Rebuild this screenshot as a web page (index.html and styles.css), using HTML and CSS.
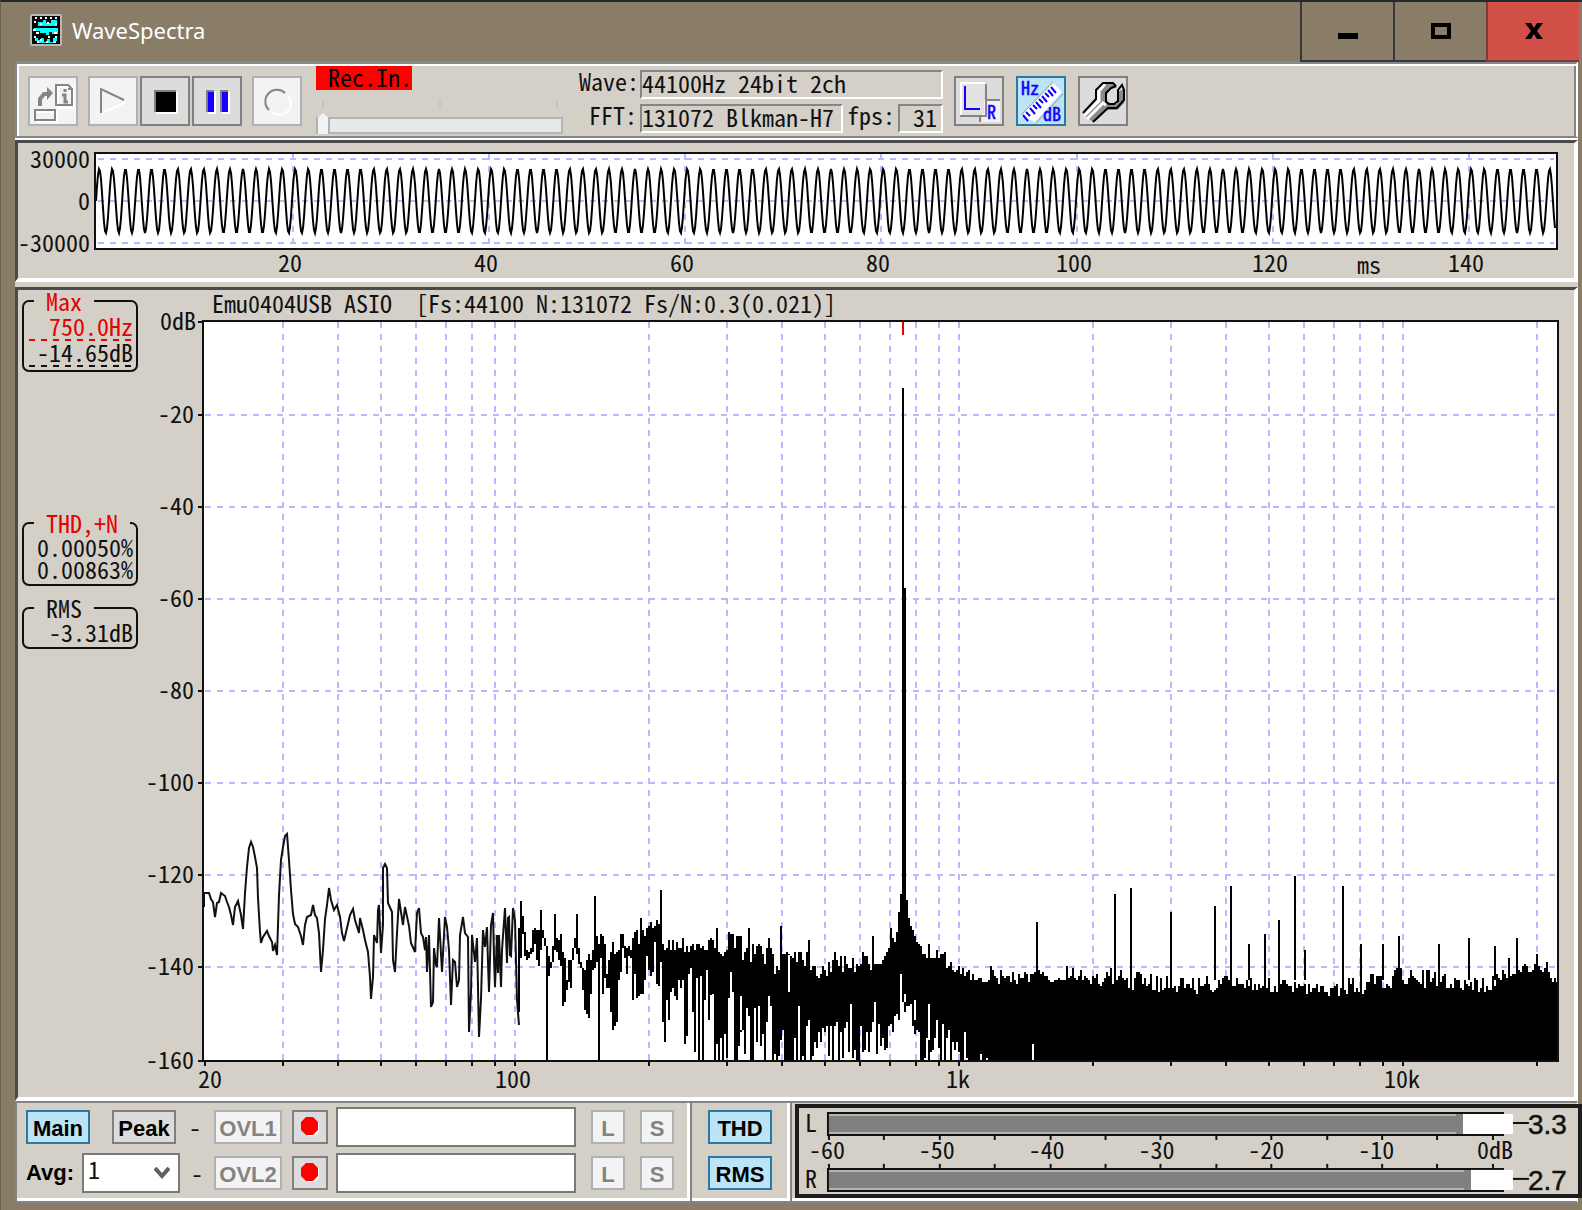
FILE: index.html
```html
<!DOCTYPE html>
<html lang="en">
<head>
  <meta charset="UTF-8">
  <meta name="viewport" content="width=device-width, initial-scale=1.0">
  <title>WaveSpectra</title>
  <link rel="stylesheet" href="styles.css">
</head>
<body>
  <div class="window">
    <!-- Title bar -->
    <header class="titlebar">
      <svg class="app-icon" width="32" height="32" viewBox="0 0 32 32" aria-hidden="true">
        <rect width="32" height="32" rx="2" fill="#b9b9b6"/>
        <rect x="2" y="2" width="28" height="28" fill="#000"/>
        <path d="M8 8h5V6h3v3h5V6h6v6H8z M4 14h24v6h-6v-2h-3v3h-3v-2h-6v-2H6v-2H4z M5 24h3v2h3v-2h3v4h3v-3h3v3h3v-4h4v3h-2v2H8v-2H5z" fill="#0ff"/>
        <path d="M5 4h2m3 0h2m3 0h2m3 0h2m3 0h2M4 8h2m4 2h2m5-1h2m6 1h2M3 16h3m0 3h3m15 0h3M4 23h2m4 3h2m6-3h2m5 0h2M7 28h2m7 0h2m6 0h2" stroke="#fff" stroke-width="2"/>
        <path d="M3 13h26" stroke="#000" stroke-width="2"/>
      </svg>
      <h1>WaveSpectra</h1>
      <div class="window-buttons">
        <button type="button" aria-label="Minimize">
          <svg width="20" height="20" viewBox="0 0 20 20"><path d="M0 12h20v6H0z"/></svg>
        </button>
        <button type="button" aria-label="Maximize">
          <svg width="20" height="20" viewBox="0 0 20 20"><path d="M2 4h16v12H2z" fill="none" stroke="#000" stroke-width="4"/></svg>
        </button>
        <button type="button" class="close" aria-label="Close">
          <svg width="20" height="20" viewBox="0 0 20 20"><path d="M1 2h6l3 5 3-5h6l-6 8 6 8h-6l-3-5-3 5H1l6-8z"/></svg>
        </button>
      </div>
    </header>

    <!-- Toolbar -->
    <div class="toolbar">
      <div class="transport">
        <button type="button" class="tool off open" aria-label="Open file" disabled>
          <svg width="46" height="46" viewBox="0 0 46 46" fill="none" stroke-width="2">
            <path d="M7 34h20v10H7M28 9v21h16V9z" stroke="#fff"/>
            <path d="M5 32h20v10H5zM26 7h12l4 4v16H26zM42 11h-4" stroke="#858585"/>
            <path d="M10 28v-7l4-5h6" stroke="#858585" stroke-width="4"/>
            <path d="M17 9l6 6-6 7z" fill="#858585"/>
            <path d="M35 11v3M32 17h3v7h3" stroke="#858585" stroke-width="3"/>
          </svg>
        </button>
        <button type="button" class="tool off play" aria-label="Play" disabled>
          <svg width="46" height="46" viewBox="0 0 46 46" fill="none" stroke-width="2">
            <path d="M12 35l24-11" stroke="#fff"/>
            <path d="M11 35V11l23 11" stroke="#858585"/>
          </svg>
        </button>
        <button type="button" class="tool" aria-label="Stop">
          <svg width="46" height="46" viewBox="0 0 46 46"><path d="M14 14h22v22H14z" fill="#fff"/><path d="M12 12h22v22H12z" fill="#808080"/><path d="M14 14h20v20H14z"/></svg>
        </button>
        <button type="button" class="tool" aria-label="Pause">
          <svg width="46" height="46" viewBox="0 0 46 46"><path d="M14 14h8v22h-8zM28 14h8v22h-8z" fill="#fff"/><path d="M12 12h8v22h-8zM26 12h8v22h-8z" fill="#808080"/><path d="M14 14h6v20h-6zM28 14h6v20h-6z" fill="#1400ff"/></svg>
        </button>
        <button type="button" class="tool off rec" aria-label="Record" disabled>
          <svg width="46" height="46" viewBox="0 0 46 46" fill="none" stroke-width="2">
            <path d="M34 18a11 11 0 0 1-17 15" stroke="#fff"/>
            <path d="M15 32a11 11 0 0 1 16-17" stroke="#858585"/>
          </svg>
        </button>
      </div>

      <div class="rec-status">
        <span class="rec-in">Rec.In.</span>
        <div class="ticks"><i></i><i></i><i></i></div>
        <input type="range" class="position" aria-label="Position" min="0" max="100" value="0">
      </div>

      <div class="info">
        <span>Wave:</span>
        <output class="readout wide">44100Hz 24bit 2ch</output>
        <span>FFT:</span>
        <output class="readout">131072 Blkman-H7</output>
        <span>fps:</span>
        <output class="readout fps">31</output>
      </div>

      <div class="options">
        <button type="button" class="tool" aria-label="Left and right channels">
          <svg width="46" height="46" viewBox="0 0 46 46">
            <path d="M26 22h18v22H26z" fill="#f3f3f3"/>
            <path d="M4 38h26V6M24 38v6M30 22h14" fill="none" stroke="#858585" stroke-width="2"/>
            <path d="M5 37V5h24" fill="none" stroke="#fff" stroke-width="2"/>
            <path d="M6 6h22v30H6z" fill="#e2e2e2"/>
            <path d="M9 8v23h15" fill="none" stroke="#1400ff" stroke-width="2"/>
            <text x="31" y="41" class="glyph">R</text>
          </svg>
        </button>
        <button type="button" class="tool on" aria-label="Scale in Hz and dB">
          <svg width="46" height="46" viewBox="0 0 46 46">
            <path d="M3 38L35 5l9 9L17 44z" fill="#fff"/>
            <path d="M18 45l27-29M3 37L35 4" stroke="#8d9aa0" stroke-width="1" fill="none"/>
            <path d="M5 37l5 6M8 34l4 4M12 30l5 6M15 27l4 4M18 24l5 6M21 21l4 4M24 18l5 6M27 15l4 4M30 12l5 6M33 9l5 6" stroke="#1400ff" stroke-width="2"/>
            <text x="3" y="17" class="glyph">Hz</text>
            <text x="25" y="43" class="glyph">dB</text>
          </svg>
        </button>
        <button type="button" class="tool" aria-label="Settings">
          <svg width="46" height="46" viewBox="0 0 46 46">
            <path d="M4 37l14-14V13l8-8h8l3 4-6 2-4 5v6l4 4h6l1-12 5-3 1 3v11l-7 7H26L13 44z" fill="#8a8a8a"/>
            <path d="M4 38l15-15V13l6-7M7 41l16-16 3 2" fill="none" stroke="#fff" stroke-width="3"/>
            <path d="M3 35l13-14V12l7-7h10l3 3M36 8l-5 2-5 5v9l3 2h5l4-3V12l4-5 2 5v10l-7 8h-9L13 44" fill="none" stroke="#000" stroke-width="2"/>
          </svg>
        </button>
      </div>
    </div>

    <!-- Waveform -->
    <section class="panel wave-panel">
      <svg id="wave" viewBox="0 1 1556 135" role="img" aria-label="Waveform"></svg>
    </section>

    <!-- Spectrum -->
    <section class="panel spectrum-panel">
      <aside class="readings">
        <fieldset class="max">
          <legend class="red">Max</legend>
          <p class="red dashed">750.0Hz</p>
          <p class="dashed">-14.65dB</p>
        </fieldset>
        <fieldset>
          <legend class="red">THD,+N</legend>
          <p>0.00050%</p>
          <p>0.00863%</p>
        </fieldset>
        <fieldset>
          <legend>RMS</legend>
          <p>-3.31dB</p>
        </fieldset>
      </aside>
      <svg id="spectrum" viewBox="0 0 1434 807" role="img" aria-label="Spectrum"></svg>
    </section>

    <!-- Bottom bar -->
    <footer class="bottom">
      <div class="overlays">
        <div class="row">
          <button type="button" class="push on">Main</button>
          <button type="button" class="push peak">Peak</button>
          <span class="dash">-</span>
          <button type="button" class="push off ovl" disabled>OVL1</button>
          <button type="button" class="push dot" aria-label="Capture overlay 1"><svg width="20" height="20" viewBox="0 0 20 20"><path d="M7 2h8l4 4v9l-4 4H8z" fill="#fff"/><path d="M6 0h7l5 5v8l-5 5H6l-5-5V5z" fill="#f00"/></svg></button>
          <input type="text" class="name" aria-label="Overlay 1 name">
          <button type="button" class="push off sq" disabled>L</button>
          <button type="button" class="push off sq" disabled>S</button>
        </div>
        <div class="row">
          <label for="avg">Avg:</label>
          <select id="avg">
            <option>1</option>
            <option>2</option>
            <option>4</option>
            <option>8</option>
          </select>
          <span class="dash">-</span>
          <button type="button" class="push off ovl" disabled>OVL2</button>
          <button type="button" class="push dot" aria-label="Capture overlay 2"><svg width="20" height="20" viewBox="0 0 20 20"><path d="M7 2h8l4 4v9l-4 4H8z" fill="#fff"/><path d="M6 0h7l5 5v8l-5 5H6l-5-5V5z" fill="#f00"/></svg></button>
          <input type="text" class="name" aria-label="Overlay 2 name">
          <button type="button" class="push off sq" disabled>L</button>
          <button type="button" class="push off sq" disabled>S</button>
        </div>
      </div>
      <div class="measure">
        <button type="button" class="push on">THD</button>
        <button type="button" class="push on">RMS</button>
      </div>
      <div class="meter">
        <svg id="meter" viewBox="0 0 780 86" role="img" aria-label="Level meter"></svg>
      </div>
    </footer>
  </div>

  <script src="script.js"></script>
</body>
</html>
```
FILE: styles.css
```css
* {
  box-sizing: border-box;
}

/* Half-width glyphs give a 12px cell at 24px */
body {
  margin: 0;
  background-color: #8a7d68;
  font-family: "Noto Sans CJK JP", "Liberation Mono", monospace;
  font-size: 24px;
  font-feature-settings: "hwid";
  color: #111;
}

button, input, select {
  font: inherit;
  font-feature-settings: inherit;
  color: inherit;
  margin: 0;
  padding: 0;
}

svg {
  display: block;
  overflow: visible;
}

.window {
  min-height: 100vh;
  padding: 0 4px 8px 14px;
  border-top: 2px solid #25282d;
  border-left: 1px solid #6c6252;
}

/* Title bar */
.titlebar {
  display: flex;
  align-items: center;
  height: 59px;
  padding-left: 15px;
}

.titlebar h1 {
  flex: 1;
  margin: 0 10px;
  padding-bottom: 3px;
  font-family: "Noto Sans", sans-serif;
  font-size: 22px;
  font-weight: normal;
  color: #fff;
}

.app-icon {
  margin-bottom: 3px;
}

.window-buttons {
  display: flex;
  align-self: stretch;
  margin-right: -1px;
}

.window-buttons button {
  display: flex;
  align-items: center;
  justify-content: center;
  width: 93px;
  height: 60px;
  border: 2px solid #38383a;
  border-width: 0 0 2px 2px;
  background: none;
}

.window-buttons .close {
  background-color: #d15149;
  border-color: #7c3a35;
}

/* Toolbar */
.toolbar {
  display: flex;
  height: 77px;
  padding: 0 0 0 9px;
  background-color: #d4d0c8;
  border-top: 3px solid #848a90;
  border-bottom: 2px solid #848482;
  border-left: 2px solid #848a90;
  border-right: 2px solid #fff;
  box-shadow: inset 2px 2px #fff, inset -2px 0 #848482;
}

.transport, .options {
  display: flex;
  padding-top: 12px;
  margin-left: 2px;
}

.tool {
  width: 50px;
  height: 50px;
  border: 2px solid #808080;
  background-color: #dcdcdc;
  margin-right: 2px;
}

.off {
  background-color: #f3f3f3;
  border-color: #adb2b5;
  color: #838383;
}

.on {
  background-color: #bce4f7;
  border-color: #2c78a0;
}

.open {
  margin-right: 10px;
}

.rec {
  margin-left: 8px;
}

.rec-status {
  width: 247px;
  margin-left: 12px;
  padding-top: 2px;
}

.rec-in {
  display: block;
  width: 96px;
  height: 24px;
  background-color: #f00;
  line-height: 22px;
  text-align: right;
  color: #000;
}

.ticks {
  display: flex;
  justify-content: space-between;
  margin: 11px 5px 5px 6px;
}

.ticks i {
  width: 2px;
  height: 7px;
  background-color: #c4c4c4;
}

.position {
  -webkit-appearance: none;
  appearance: none;
  display: block;
  width: 100%;
  height: 21px;
  background: none;
}

.position::-webkit-slider-runnable-track {
  height: 17px;
  margin-top: 4px;
  background-color: #e7eaea;
  border: 2px solid #b1b5b7;
}

.position::-webkit-slider-thumb {
  -webkit-appearance: none;
  width: 14px;
  height: 21px;
  margin: -6px 0 0 -2px;
  background: linear-gradient(#f3f3f3, #f3f3f3) center / 10px 100% no-repeat #adb2b5;
  clip-path: polygon(50% 0, 100% 28%, 100% 100%, 0 100%, 0 28%);
}

.info {
  display: grid;
  grid-template-columns: 61px 203px 55px 45px;
  grid-template-rows: 29px 29px;
  row-gap: 5px;
  align-self: start;
  margin-left: 16px;
  padding-top: 6px;
  line-height: 22px;
}

.info span {
  padding-right: 3px;
  text-align: right;
}

.readout {
  border: 2px solid #858585;
  border-right-color: #fff;
  border-bottom-color: #fff;
  white-space: nowrap;
}

.readout.wide {
  grid-column: span 3;
}

.readout.fps {
  padding-right: 4px;
  text-align: right;
}

.options {
  gap: 10px;
  margin-left: 11px;
}

.glyph {
  font-size: 18px;
  fill: #1400ff;
  stroke: #1400ff;
  stroke-width: 0.5;
}

/* Plot panels */
.panel {
  background-color: #d4d0c8;
  border: 3px solid #4a4a4a;
  border-right: 4px solid #fff;
  border-bottom: 4px solid #fff;
}

.wave-panel {
  margin-top: 2px;
  box-shadow: 0 -2px #fff, 0 5px #d4d0c8;
}

.spectrum-panel {
  display: flex;
  margin-top: 5px;
}

#wave {
  width: 100%;
}

#spectrum {
  flex: 1;
  min-width: 0;
}

.panel text, .meter text {
  fill: #111;
}

.end {
  text-anchor: end;
}

.mid {
  text-anchor: middle;
}

.grid {
  stroke: #bcb8ff;
  stroke-width: 2;
  stroke-dasharray: 6 6;
}

.axis {
  fill: none;
  stroke: #111;
  stroke-width: 2;
}

.trace {
  fill: #000;
}

.tone {
  fill: none;
  stroke: #000;
  stroke-width: 2;
}

/* Readings beside the spectrum */
.readings {
  width: 122px;
  padding: 0 2px 0 4px;
}

.readings fieldset {
  margin: 0 0 11px;
  padding: 2px 3px 4px 0;
  border: 2px solid #111;
  border-radius: 7px;
  line-height: 22px;
}

.readings legend {
  margin-left: 10px;
  padding: 0 12px;
  line-height: 22px;
}

.readings p {
  margin: 0;
  text-align: right;
}

.readings .max {
  margin-bottom: 140px;
  padding: 3px 3px 3px 0;
}

.readings .dashed {
  height: 26px;
  margin-left: 5px;
  background: repeating-linear-gradient(90deg, currentColor 0 6px, transparent 6px 12px) left bottom / 100% 2px no-repeat;
}

.red {
  color: #e60000;
}

/* Bottom bar */
.bottom {
  display: flex;
  height: 102px;
  background-color: #d4d0c8;
  border: 2px solid #848482;
  border-right: 1px solid #fff;
  box-shadow: inset 0 -3px #fff;
}

.row {
  display: flex;
  align-items: center;
  height: 40px;
  margin-bottom: 6px;
}

.overlays {
  width: 673px;
  padding: 4px 0 0 9px;
  border-right: 3px solid #fff;
}

.push {
  width: 64px;
  height: 34px;
  padding-top: 3px;
  border: 2px solid #808080;
  background-color: #dcdcdc;
  font-family: "Liberation Sans", sans-serif;
  font-size: 22px;
  font-weight: bold;
  line-height: 27px;
  color: #000;
}

.push.on {
  background-color: #bce4f7;
  border-color: #2c78a0;
}

.push.off {
  background-color: #f3f3f3;
  border-color: #adb2b5;
  color: #838383;
}

.push.peak {
  margin-left: 22px;
}

.dash {
  width: 38px;
  line-height: 30px;
  text-align: center;
}

select + .dash {
  width: 34px;
}

.push.ovl {
  width: 68px;
}

.push.dot {
  display: flex;
  align-items: center;
  justify-content: center;
  width: 36px;
  margin: 0 8px 0 10px;
  padding: 0;
}

.name {
  width: 240px;
  height: 40px;
  padding: 0 6px;
  border: 2px solid #7a7a7a;
  background-color: #fff;
}

.push.sq {
  width: 34px;
  margin-left: 15px;
}

.row label {
  width: 56px;
  font-family: "Liberation Sans", sans-serif;
  font-size: 22px;
  font-weight: bold;
  color: #000;
}

.row select {
  -webkit-appearance: none;
  appearance: none;
  width: 98px;
  height: 40px;
  padding: 0 4px 8px;
  border: 2px solid #7a7a7a;
  border-radius: 0;
  line-height: 28px;
  background: #fff url("data:image/svg+xml,%3Csvg xmlns='http://www.w3.org/2000/svg' width='16' height='12'%3E%3Cpath d='M1 1l7 8 7-8' fill='none' stroke='%23606060' stroke-width='4'/%3E%3C/svg%3E") no-repeat right 8px center;
}

.measure {
  display: flex;
  flex-direction: column;
  gap: 12px;
  width: 100px;
  padding: 7px 0 0 16px;
  border-left: 2px solid #848482;
  border-right: 3px solid #fff;
  box-shadow: 2px 0 #848482;
}

/* Level meter window, laid over the right edge of the frame */
.meter {
  flex: 1;
  align-self: flex-start;
  margin: 1px -5px 0 5px;
  border: 4px solid #1c1c1a;
  background-color: #d4d0c8;
  position: relative;
}

.meter .level {
  font-family: "Liberation Sans", sans-serif;
  font-size: 28px;
  stroke: #111;
  stroke-width: 0.5;
}
```
FILE: script.js
```js
// Small seeded generator so the noise floor is the same on every load
let seed = 7;
function rnd() {
  seed = (seed * 16807) % 2147483647;
  return seed / 2147483647;
}

function line(cls, x1, y1, x2, y2) {
  return `<line class="${cls}" x1="${x1}" y1="${y1}" x2="${x2}" y2="${y2}"/>`;
}

function text(cls, x, y, str) {
  return `<text class="${cls}" x="${x}" y="${y}" xml:space="preserve">${str}</text>`;
}

// Vertical bar two pixels wide
function bar(x, top, bottom) {
  return `M${x} ${top}h2V${bottom}h-2z`;
}

function drawWave() {
  let out = '<rect x="77" y="10" width="1463" height="96" fill="#fff"/>';
  [17, 59, 101].forEach(y => { out += line('grid', 80, y, 1536, y); });
  for (let i = 0; i < 7; i++) {
    out += line('grid', 275 + i * 196, 12, 275 + i * 196, 105);
  }

  // 750 Hz tone, 196px for 20 ms
  let points = '';
  for (let x = 78; x <= 1537; x++) {
    const y = 59 - 32 * Math.sin((x - 78) / 196 * 15 * 2 * Math.PI);
    points += `${x},${Math.round(y)} `;
  }
  out += `<polyline class="tone" points="${points}"/>`;
  out += '<rect class="axis" x="77" y="11" width="1462" height="96"/>';

  out += text('end', 72, 26, '30000') + text('end', 72, 68, '0') + text('end', 72, 110, '-30000');
  for (let i = 0; i < 7; i++) {
    out += text('mid', 272 + i * 196, 130, 20 + i * 20);
  }
  out += text('mid', 1351, 132, 'ms');
  document.getElementById('wave').innerHTML = out;
}

// Low end of the trace as x,y pairs in thirds of a pixel
const lowEnd = [612,322,612,278,628,278,634,298,640,305,645,350,652,310,657,305,663,278,674,287,680,305,686,322,
  692,345,698,375,704,322,715,302,722,345,729,388,735,280,741,200,747,145,753,127,759,140,766,170,771,205,775,295,
  779,395,783,430,789,410,800,392,808,408,816,425,820,453,826,435,831,465,837,285,843,180,849,140,855,108,862,103,
  868,180,874,270,880,342,886,372,895,380,902,408,909,435,916,375,922,350,932,345,938,315,944,345,950,355,957,400,
  963,515,969,450,975,357,981,315,987,265,993,300,1003,330,1011,315,1020,350,1027,400,1033,422,1040,385,1050,345,
  1059,327,1066,360,1076,398,1081,355,1090,390,1095,420,1105,455,1110,530,1113,598,1119,530,1122,405,1131,430,
  1133,330,1137,315,1143,460,1149,375,1149,205,1155,193,1161,205,1164,310,1175,335,1180,480,1185,515,1191,400,
  1197,297,1209,375,1215,320,1227,378,1233,430,1245,455,1251,340,1257,325,1263,400,1269,410,1275,450,1278,410,1281,515,
  1287,405,1293,620,1299,605,1302,445,1307,495,1311,500,1317,355,1325,515,1335,350,1341,380,1347,450,1353,615,1358,480,
  1364,485,1371,560,1377,540,1379,405,1389,350,1395,400,1405,412,1408,695,1413,575,1417,405,1425,485,1431,415,1437,712,
  1443,598,1449,390,1455,440,1461,380,1464,490,1468,575,1473,375,1479,338,1482,470,1485,560,1490,405,1494,520,1498,405,
  1503,562,1507,450,1515,325,1521,490,1524,355,1527,350,1530,465,1533,468,1539,325,1545,360,1551,600,1557,675];

// Upper edge of the noise: [x, y, jitter]
const topEdge = [[517,945,8],[521,902,4],[525,945,8],[529,950,8],[533,926,6],[537,928,5],[541,915,8],[547,960,10],
  [553,950,8],[556,932,6],[561,945,10],[566,970,12],[574,940,15],[582,965,14],[595,940,10],[601,938,5],[606,960,14],
  [615,945,10],[640,940,12],[650,926,4],[657,925,6],[664,944,6],[690,944,10],
  [715,945,12],[740,944,14],[750,954,14],[770,950,12],[774,970,8],[786,950,8],[805,958,10],[820,970,12],[835,962,10],
  [870,962,12],[882,955,8],[888,945,5],[896,936,4],[898,910,2],[901,894,0],[905,895,0],[907,906,3],[909,930,6],
  [914,936,4],[922,948,10],[935,960,12],[948,962,8],[958,970,5],[970,975,8],[990,975,10],[1010,977,10],[1040,976,6],
  [1050,982,3],[1066,972,8],[1090,975,12],[1110,978,10],[1160,983,9],[1200,985,9],[1245,982,8],[1280,986,7],
  [1328,991,5],[1345,986,10],[1380,983,10],[1400,976,9],[1440,980,9],[1486,986,8],[1500,978,8],[1520,968,5],
  [1540,970,5],[1556,982,4]];

// Lower edge of the noise
const bottomEdge = [[516,1015,12],[519,1000,8],[521,925,5],[525,960,10],[532,948,12],[537,965,10],[543,930,8],
  [547,985,12],[552,960,10],[558,945,20],[562,1005,20],[565,1015,15],[571,960,25],[577,955,15],[583,1000,25],
  [587,1018,12],[592,985,30],[600,950,12],[602,1000,30],[612,1010,24],[625,975,38],[640,975,24],[655,960,20],
  [664,1010,36],[675,990,40],[690,1005,50],
  [715,1020,45],[740,1035,35],[780,1035,35],[815,1045,28],
  [850,1048,26],[880,1045,26],[890,1030,8],[897,1015,6],[905,1010,14],[914,1025,16],[925,1055,25],[945,1055,20],
  [965,1062,8],[985,1062,2],[1556,1062,0]];

const spikes = [[521,901],[541,910],[555,914],[577,914],[595,896],[641,918],[661,890],[717,928],[749,928],[781,926],
  [809,940],[873,936],[891,928],[1037,922],[1115,894],[1131,888],[1171,912],[1215,906],[1231,886],[1249,944],
  [1265,934],[1279,920],[1295,876],[1305,950],[1343,886],[1361,944],[1383,944],[1399,936],[1439,944],[1469,938],
  [1495,946],[1509,958],[1517,938],[1537,954],[1547,962]];

// Bins where the trace falls to the bottom of the plot
const dips = [547, 599, 699, 703, 715, 719, 723, 735, 737, 765, 785, 787, 789];

// White gaps in the solid area: [x, top, bottom]
const gaps = [[701,976,1060],[711,995,1060],[731,972,1060],[741,996,1030],[747,1008,1030],[769,996,1050],[789,955,992],
  [799,1006,1060],[827,1026,1060],[851,1004,1060],[875,1002,1060],[901,974,1020],[905,994,1002],[915,1000,1020],
  [929,1004,1040],[937,1020,1060],[943,1024,1060],[949,1030,1060],[957,1042,1060],[965,1032,1060],[981,1054,1060],
  [987,1058,1060],[1033,1044,1060]];

function sample(edge, x) {
  for (let i = 1; i < edge.length; i++) {
    const a = edge[i - 1];
    const b = edge[i];
    if (x <= b[0]) {
      const t = Math.max(0, (x - a[0]) / (b[0] - a[0]));
      const jitter = a[2] + (b[2] - a[2]) * t;
      return a[1] + (b[1] - a[1]) * t + (rnd() * 2 - 1) * jitter;
    }
  }
  return edge[edge.length - 1][1];
}

function drawSpectrum() {
  let out = '<rect x="203" y="321" width="1354" height="740" fill="#fff"/>';
  for (let i = 1; i < 8; i++) {
    out += line('grid', 205, 323 + i * 92, 1557, 323 + i * 92);
  }

  // Log frequency scale, 444px per decade
  const freqs = [];
  [10, 100, 1000, 10000].forEach(dec => {
    for (let m = 1; m < 10; m++) {
      if (dec * m >= 20 && dec * m <= 20000) freqs.push(dec * m);
    }
  });
  let ticks = '';
  freqs.forEach(f => {
    const x = Math.round(515 + 444 * Math.log10(f / 100));
    if (f > 20) out += line('grid', x, 322, x, 1060);
    ticks += line('axis', x, 1061, x, 1066);
  });

  let low = '';
  for (let i = 0; i < lowEnd.length; i += 2) {
    low += `${Math.round(lowEnd[i] / 3)},${Math.round(800 + lowEnd[i + 1] / 3)} `;
  }
  out += `<polyline class="axis" points="${low}"/>`;

  let d = '';
  let prevTop = 960;
  let prevBottom = 1025;
  for (let x = 518; x < 1558; x += 2) {
    let top = Math.round(sample(topEdge, x) / 2) * 2;
    let bottom = Math.round(sample(bottomEdge, x) / 2) * 2;
    if (dips.includes(x + 1)) bottom = 1060;
    bottom = Math.min(1060, Math.max(bottom, top + 6, prevTop));
    top = Math.min(top, prevBottom);
    d += bar(x, top, bottom);
    prevTop = top;
    prevBottom = bottom;
  }
  spikes.forEach(s => { d += bar(s[0] - 1, s[1], s[0] < 680 ? 950 : 980); });
  d += bar(902, 388, 1000) + bar(904, 588, 1000) + bar(900, 894, 970);
  out += `<path class="trace" d="${d}"/>`;

  let g = '';
  gaps.forEach(s => { g += bar(s[0] - 1, s[1], s[2]); });
  out += `<path fill="#fff" d="${g}"/>`;

  out += '<rect x="902" y="322" width="2" height="13" fill="#e60000"/>';
  out += '<rect class="axis" x="203" y="321" width="1355" height="740"/>' + ticks;

  for (let i = 0; i <= 8; i++) {
    const y = i === 0 ? 322 : (i === 8 ? 1061 : 323 + i * 92);
    out += line('axis', 198, y, 203, y);
    out += text('end', i === 0 ? 196 : 194, y + 8, i === 0 ? '0dB' : -20 * i);
  }
  out += text('mid', 210, 1088, '20') + text('mid', 513, 1088, '100');
  out += text('mid', 958, 1088, '1k') + text('mid', 1402, 1088, '10k');
  out += text('', 212, 313, 'Emu0404USB ASIO  [Fs:44100 N:131072 Fs/N:0.3(0.021)]');
  document.getElementById('spectrum').innerHTML = `<g transform="translate(-140 -290)">${out}</g>`;
}

function drawMeter() {
  const channels = [
    { name: 'L', y: 4, end: 665, level: '3.3' },
    { name: 'R', y: 60, end: 673, level: '2.7' }
  ];
  let out = '';
  channels.forEach(c => {
    out += `<rect x="30" y="${c.y + 2}" width="${c.end - 30}" height="20" fill="#808080"/>`;
    out += `<path d="M30 ${c.y + 3}H${c.end - 7}M30 ${c.y + 21}H${c.end - 7}" stroke="#b4b4b4" stroke-width="2"/>`;
    out += `<path class="axis" d="M706 ${c.y + 1}H29V${c.y + 23}H706"/>`;
    out += `<rect x="${c.end}" y="${c.y + 2}" width="${715 - c.end}" height="20" fill="#fff"/>`;
    out += text('mid', 12, c.y + 20, c.name);
    out += line('axis', 715, c.y + 11, 731, c.y + 11);
    out += text('level', 730, c.y + 22, c.level);
  });
  for (let i = 0; i <= 12; i++) {
    const x = Math.round(30 + i * 55.4);
    out += line('axis', x, 28, x, 32) + line('axis', x, 56, x, 60);
  }
  for (let i = 0; i < 7; i++) {
    out += text('mid', i === 6 ? 697 : 28 + i * 110, 51, i === 6 ? '0dB' : -60 + i * 10);
  }
  document.getElementById('meter').innerHTML = out;
}

drawWave();
drawSpectrum();
drawMeter();
```
